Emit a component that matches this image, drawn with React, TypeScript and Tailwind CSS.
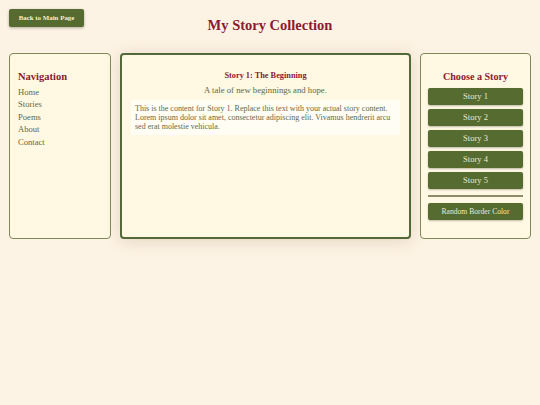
import React from 'react';

const serif = { fontFamily: '"Liberation Serif", "DejaVu Serif", serif' };

const navLinks = ['Home', 'Stories', 'Poems', 'About', 'Contact'];
const stories = ['Story 1', 'Story 2', 'Story 3', 'Story 4', 'Story 5'];

export default function App() {
  return (
    <div
      className="w-[540px] h-[405px] bg-[#fdf3e4] text-[#646a45] flex flex-col px-[9px]"
      style={serif}
    >
      {/* Header */}
      <header className="grid grid-cols-[1fr_auto_1fr] items-start pt-[9px] h-[53px]">
        <div>
          <button className="block h-[18px] w-[75px] bg-[#556b2f] text-[#f3eedc] text-[6.9px] font-bold rounded-[2px] shadow-[0_1px_3px_rgba(0,0,0,0.3)]">
            Back to Main Page
          </button>
        </div>
        <h1 className="text-[14.5px] font-bold text-[#8b1a32] leading-none pt-[9px]">
          My Story Collection
        </h1>
        <div />
      </header>

      {/* Panels */}
      <main className="grid grid-cols-[102px_1fr_111px] gap-[9px] h-[186px]">
        {/* Left: navigation */}
        <aside className="bg-[#fff8e2] border border-[#7d8a55] rounded-[4px] px-[8px] pt-[18px]">
          <h2 className="text-[10.5px] font-bold text-[#8b1a32] leading-none mb-[3px]">Navigation</h2>
          <ul className="flex flex-col">
            {navLinks.map((link) => (
              <li key={link} className="text-[8.6px] leading-[12.5px]">
                {link}
              </li>
            ))}
          </ul>
        </aside>

        {/* Middle: story */}
        <section className="bg-[#fff8e2] border-2 border-[#55683a] rounded-[4px] px-[9px] pt-[17px] shadow-[0_2px_16px_rgba(120,90,50,0.2)]">
          <h3 className="text-center text-[8.3px] font-bold text-[#8b1a32] leading-none">
            Story 1: The Beginning
          </h3>
          <p className="text-center text-[8.7px] leading-none mt-[6px]">A tale of new beginnings and hope.</p>
          <div className="bg-[#fffdf4] mt-[5px] px-[4px] py-[4px] text-[8px] leading-[9px]">
            This is the content for Story 1. Replace this text with your actual story content. Lorem ipsum dolor
            sit amet, consectetur adipiscing elit. Vivamus hendrerit arcu sed erat molestie vehicula.
          </div>
        </section>

        {/* Right: story picker */}
        <aside className="bg-[#fff8e2] border border-[#7d8a55] rounded-[4px] px-[7px] pt-[18px]">
          <h2 className="text-center text-[10.1px] font-bold text-[#8b1a32] leading-none mb-[6px]">
            Choose a Story
          </h2>
          <div className="flex flex-col gap-[4px]">
            {stories.map((s) => (
              <button
                key={s}
                className="block h-[17px] w-full bg-[#556b2f] text-[#ede8d4] text-[8.5px] rounded-[2px] shadow-[0_1px_2px_rgba(0,0,0,0.25)]"
              >
                {s}
              </button>
            ))}
          </div>
          <div className="h-[2px] bg-[#8f8a6a] mt-[6px] mb-[6px]" />
          <button className="block h-[17px] w-full bg-[#556b2f] text-[#ede8d4] text-[7.6px] rounded-[2px] shadow-[0_1px_2px_rgba(0,0,0,0.25)]">
            Random Border Color
          </button>
        </aside>
      </main>
    </div>
  );
}
